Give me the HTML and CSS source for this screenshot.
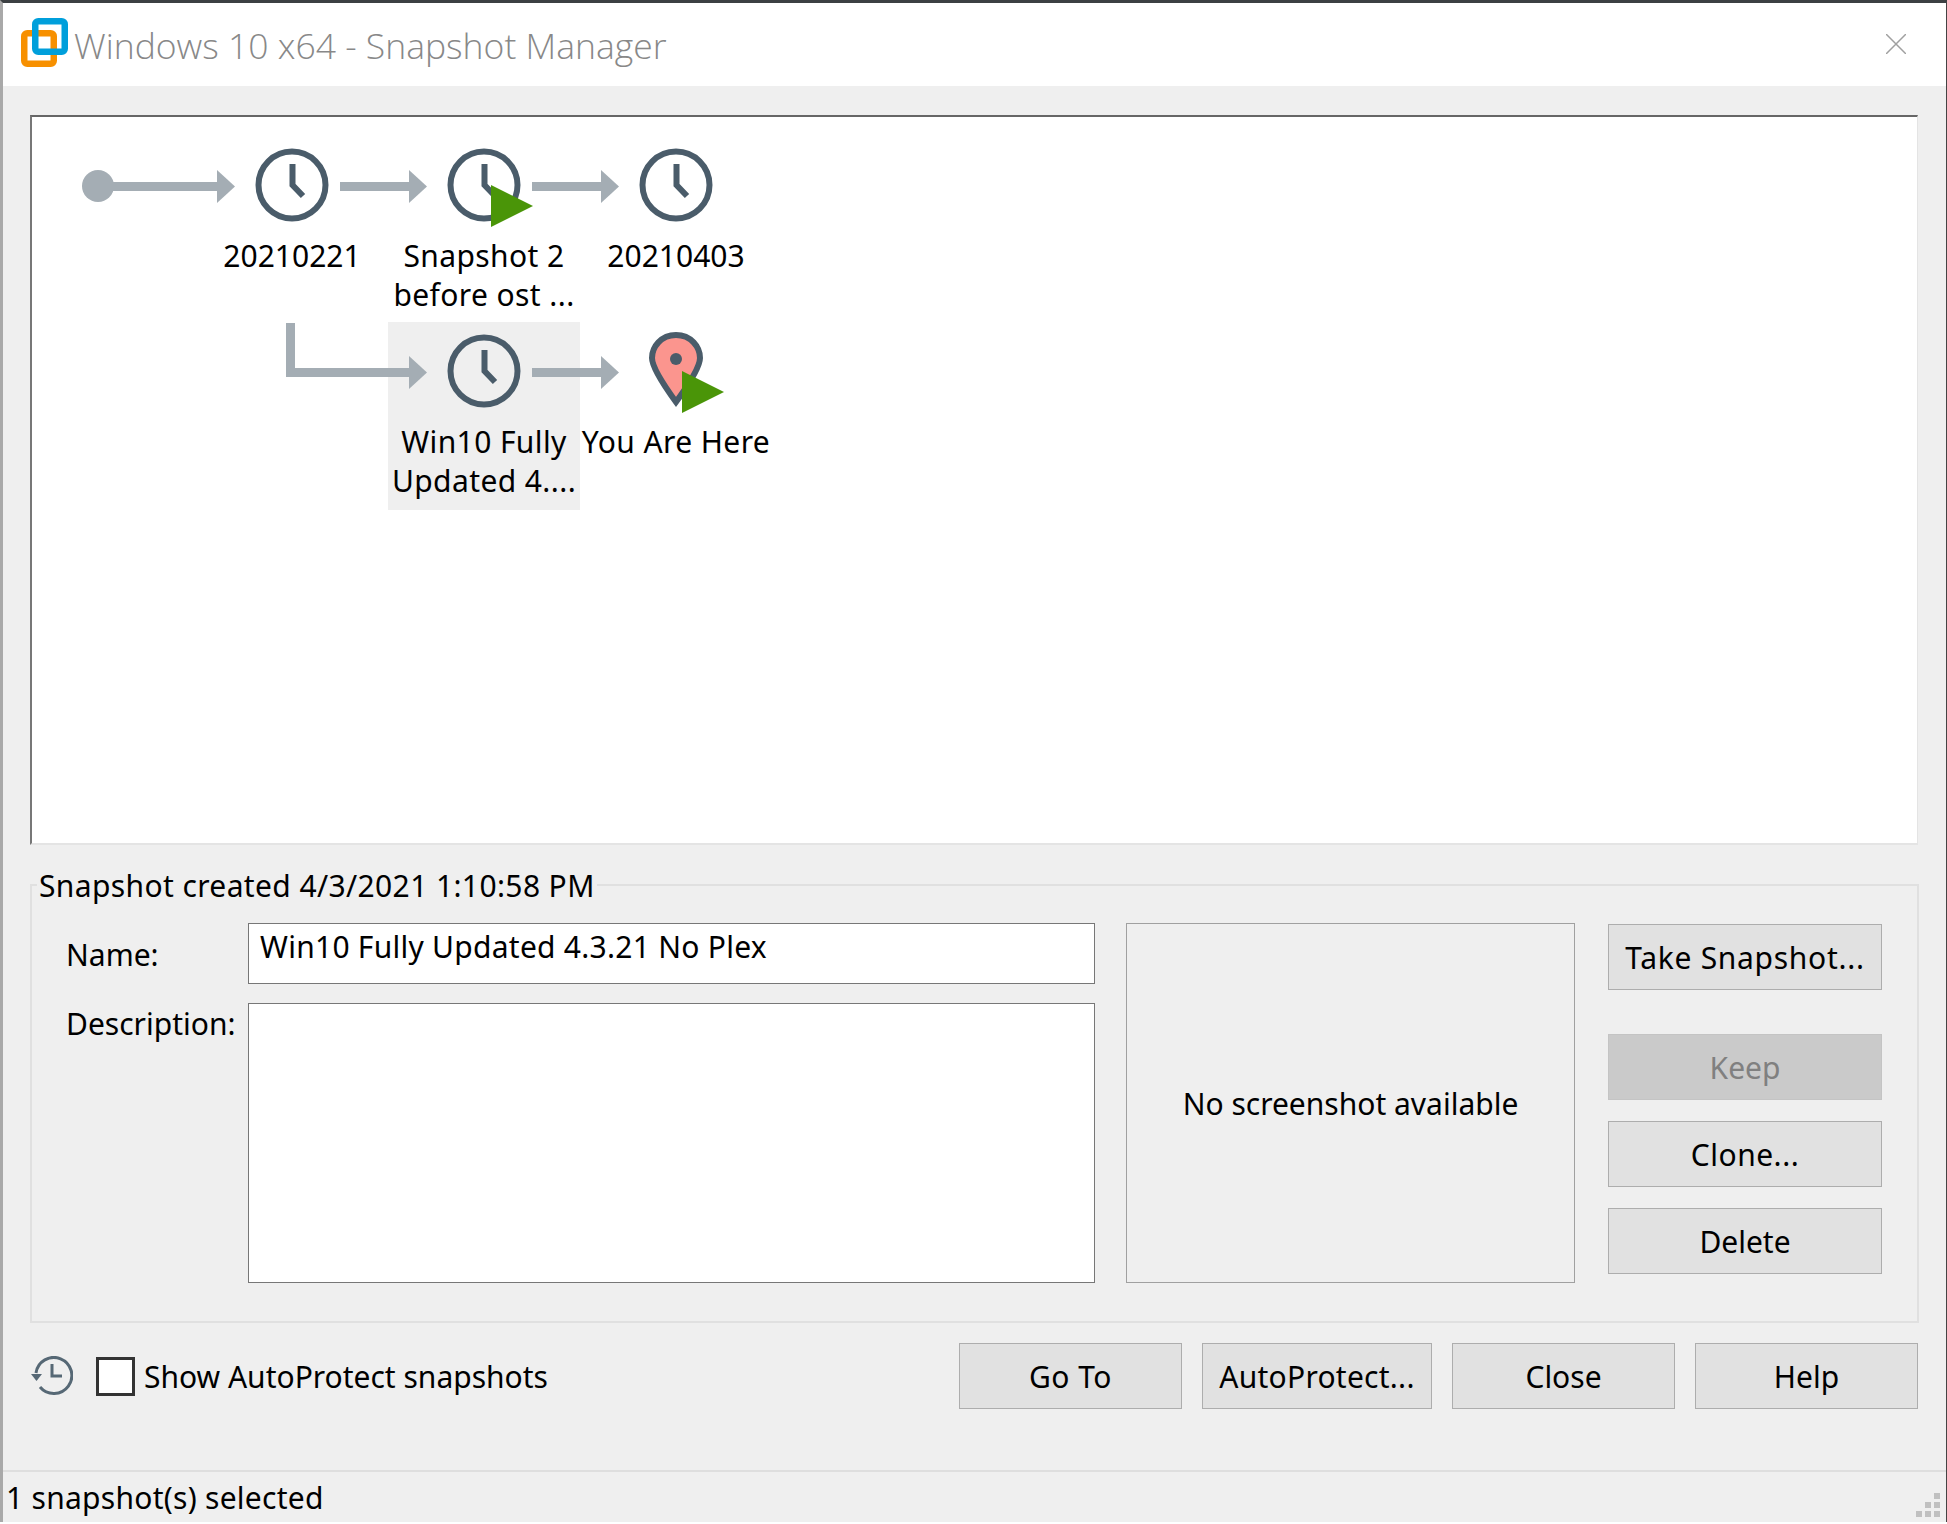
FILE: index.html
```html
<!DOCTYPE html>
<html lang="en">
<head>
    <meta charset="UTF-8">
    <title>Windows 10 x64 - Snapshot Manager</title>
    <link rel="stylesheet" href="styles.css">
</head>
<body>
    <div class="window">
        <header class="titlebar">
            <svg class="app-logo" width="47" height="49" viewBox="0 0 47 49">
                <rect x="3.250" y="15.250" width="29.500" height="30.500" rx="3" fill="none" stroke="#f79000" stroke-width="6.500"/>
                <rect x="14.250" y="3.250" width="29.500" height="30.500" rx="3" fill="none" stroke="#009fdb" stroke-width="6.500"/>
            </svg>
            <span class="window-title">Windows 10 x64 - Snapshot Manager</span>
            <svg class="close-x" width="20" height="20" viewBox="0 0 20 20">
                <path d="M0 0L20 20M20 0L0 20" stroke="#a0a0a0" stroke-width="1.500"/>
            </svg>
        </header>

        <main class="content">
            <section class="tree-panel">
                <svg class="tree-lines" width="1888" height="400" viewBox="30 115 1888 400">
                    <circle cx="98" cy="186" r="16" fill="#a4adb4"/>
                    <path class="link" d="M98 186.500H217"/>
                    <path class="head" d="M217 170L235 186.500L217 203Z"/>
                    <path class="link" d="M340 186.500H409"/>
                    <path class="head" d="M409 170L427 186.500L409 203Z"/>
                    <path class="link" d="M532 186.500H601"/>
                    <path class="head" d="M601 170L619 186.500L601 203Z"/>
                    <path class="link" d="M290.500 323V372.500H409"/>
                    <path class="head" d="M409 356L427 372.500L409 389Z"/>
                    <path class="link" d="M532 372.500H601"/>
                    <path class="head" d="M601 356L619 372.500L601 389Z"/>
                </svg>
                <div class="tree-grid">
                    <div class="node node-first">
                        <svg class="node-icon" width="84" height="84" viewBox="0 0 84 84">
                            <circle class="clock-ring" cx="42" cy="42" r="33.500"/>
                            <path class="clock-hand" d="M42.500 21V42L53 53"/>
                        </svg>
                        <div class="node-label">20210221</div>
                    </div>
                    <div class="node">
                        <svg class="node-icon" width="84" height="84" viewBox="0 0 84 84">
                            <circle class="clock-ring" cx="42" cy="42" r="33.500"/>
                            <path class="clock-hand" d="M42.500 21V42L53 53"/>
                            <path class="play" d="M49 42L91 63L49 84Z"/>
                        </svg>
                        <div class="node-label label-wide">Snapshot 2<br>before ost ...</div>
                    </div>
                    <div class="node">
                        <svg class="node-icon" width="84" height="84" viewBox="0 0 84 84">
                            <circle class="clock-ring" cx="42" cy="42" r="33.500"/>
                            <path class="clock-hand" d="M42.500 21V42L53 53"/>
                        </svg>
                        <div class="node-label">20210403</div>
                    </div>
                    <div class="node node-selected">
                        <svg class="node-icon" width="84" height="84" viewBox="0 0 84 84">
                            <circle class="clock-ring" cx="42" cy="42" r="33.500"/>
                            <path class="clock-hand" d="M42.500 21V42L53 53"/>
                        </svg>
                        <div class="node-label label-wide">Win10 Fully<br>Updated 4....</div>
                    </div>
                    <div class="node node-here">
                        <svg class="node-icon" width="84" height="84" viewBox="0 0 84 84">
                            <path class="pin" d="M42 6C27 6 18 18 18 29C18 40 34 62 42 73C50 62 66 40 66 29C66 18 57 6 42 6Z"/>
                            <circle cx="42" cy="30" r="6" fill="#4a5c6a"/>
                            <path class="play" d="M48 42L90 63L48 84Z"/>
                        </svg>
                        <div class="node-label label-wide">You Are Here</div>
                    </div>
                </div>
            </section>

            <fieldset class="details">
                <legend>Snapshot created 4/3/2021 1:10:58 PM</legend>
                <div class="details-row">
                    <div class="form-grid">
                        <label class="form-label">Name:</label>
                        <div class="name-input">Win10 Fully Updated 4.3.21 No Plex</div>
                        <label class="form-label form-label-top">Description:</label>
                        <div class="desc-input"></div>
                    </div>
                    <div class="shot-box">No screenshot available</div>
                    <div class="side-buttons">
                        <button class="btn btn-take">Take Snapshot...</button>
                        <button class="btn btn-disabled">Keep</button>
                        <button class="btn btn-clone">Clone...</button>
                        <button class="btn">Delete</button>
                    </div>
                </div>
            </fieldset>

            <div class="bottom-row">
                <svg class="history-icon" width="42" height="40" viewBox="0 0 42 40">
                    <path d="M5 17A18 18 0 1 1 9 31" fill="none" stroke="#566875" stroke-width="3"/>
                    <path d="M0 18H11L5.500 25Z" fill="#566875"/>
                    <path d="M21 8V20H31" fill="none" stroke="#566875" stroke-width="3"/>
                </svg>
                <span class="checkbox"></span>
                <span class="checkbox-label">Show AutoProtect snapshots</span>
                <div class="bottom-buttons">
                    <button class="btn btn-goto">Go To</button>
                    <button class="btn btn-auto">AutoProtect...</button>
                    <button class="btn btn-close">Close</button>
                    <button class="btn btn-help">Help</button>
                </div>
            </div>
        </main>

        <footer class="statusbar">
            <span class="status-text">1 snapshot(s) selected</span>
            <svg class="grip" width="24" height="24" viewBox="0 0 24 24">
                <rect x="18" y="0" width="6" height="6"/>
                <rect x="9" y="9" width="6" height="6"/>
                <rect x="18" y="9" width="6" height="6"/>
                <rect x="0" y="18" width="6" height="6"/>
                <rect x="9" y="18" width="6" height="6"/>
                <rect x="18" y="18" width="6" height="6"/>
            </svg>
        </footer>
    </div>
</body>
</html>
```
FILE: styles.css
```css
* {
    box-sizing: border-box;
}
body {
    margin: 0;
    background: #fff;
    font-family: "Noto Sans", sans-serif;
    font-size: 30px;
    color: #000;
}
.window {
    width: 1947px;
    height: 1522px;
    display: flex;
    flex-direction: column;
    background: #efefef;
    border-top: 3px solid #3c4043;
    border-left: 3px solid #a9a9a9;
    border-right: 1px solid #444;
}
.titlebar {
    height: 83px;
    flex: none;
    background: #fff;
    display: flex;
    align-items: center;
    padding-left: 18px;
    padding-right: 40px;
}
.app-logo {
    flex: none;
    margin-bottom: 4px;
}
.window-title {
    margin-left: 6px;
    font-family: "Open Sans", sans-serif;
    font-weight: 300;
    font-size: 35.500px;
    color: #888;
}
.close-x {
    margin-left: auto;
    margin-bottom: 2px;
}
.content {
    padding: 29px 28px 0 27px;
}
.tree-panel {
    position: relative;
    height: 730px;
    background: #fff;
    border-top: 2px solid #666;
    border-left: 2px solid #777;
    border-right: 1px solid #e4e4e4;
    border-bottom: 2px solid #e4e4e4;
    padding-top: 19px;
}
.tree-lines {
    position: absolute;
    left: -2px;
    top: -2px;
    z-index: 2;
}
.link {
    fill: none;
    stroke: #a4adb4;
    stroke-width: 9;
}
.head {
    fill: #a4adb4;
}
.tree-grid {
    display: grid;
    grid-template-columns: 164px repeat(3, 192px);
    grid-auto-rows: 186px;
}
.node {
    display: flex;
    flex-direction: column;
    align-items: center;
    padding-top: 7px;
}
.node-first {
    grid-column: 2;
}
.node-selected {
    grid-column: 3;
    grid-row: 2;
    background: #efefef;
    height: 188px;
}
.node-here {
    grid-column: 4;
    grid-row: 2;
}
.node-icon {
    flex: none;
    overflow: visible;
}
.clock-ring {
    fill: none;
    stroke: #4a5c6a;
    stroke-width: 6;
}
.clock-hand {
    fill: none;
    stroke: #4a5c6a;
    stroke-width: 6;
}
.play {
    fill: #4a9508;
}
.pin {
    fill: #fb958e;
    stroke: #4a5c6a;
    stroke-width: 6;
    stroke-linejoin: miter;
}
.node-label {
    margin-top: 9px;
    line-height: 39px;
    text-align: center;
    white-space: nowrap;
}
.label-wide {
    letter-spacing: 0.400px;
}
.details {
    margin: 19px 0 0 0;
    padding: 18px 0 38px 34px;
    border: 2px solid #e0e0e0;
    width: 1889px;
    min-width: 0;
}
.details legend {
    margin-left: -29px;
    padding: 2px 2px 0;
    line-height: 39px;
    letter-spacing: 0.380px;
}
.details-row {
    display: flex;
    align-items: flex-start;
}
.form-grid {
    display: grid;
    grid-template-columns: 182px 847px;
    grid-template-rows: 61px 280px;
    row-gap: 19px;
}
.form-label {
    line-height: 64px;
}
.form-label-top {
    line-height: 42px;
}
.name-input,
.desc-input {
    background: #fff;
    border: 1px solid #777;
}
.name-input {
    padding: 0 11px;
    line-height: 46px;
    letter-spacing: 0.260px;
}
.shot-box {
    width: 449px;
    height: 360px;
    margin-left: 31px;
    border: 1px solid #a0a0a0;
    display: flex;
    align-items: center;
    justify-content: center;
}
.side-buttons {
    width: 274px;
    margin-left: 33px;
    margin-top: 1px;
    display: flex;
    flex-direction: column;
    gap: 21px;
}
.btn {
    height: 66px;
    padding: 0;
    background: #e1e1e1;
    border: 1px solid #adadad;
    font: inherit;
    color: #000;
}
.btn-take {
    margin-bottom: 23px;
    letter-spacing: 0.700px;
}
.btn-disabled {
    background: #cacaca;
    border-color: #c4c4c4;
    color: #808080;
}
.btn-clone {
    letter-spacing: 0.500px;
}
.bottom-row {
    margin-top: 20px;
    display: flex;
    align-items: center;
    height: 66px;
}
.history-icon {
    flex: none;
    margin-left: 1px;
}
.checkbox {
    width: 39px;
    height: 39px;
    margin-left: 23px;
    background: #fff;
    border: 3px solid #333;
}
.checkbox-label {
    margin-left: 9px;
}
.bottom-buttons {
    margin-left: auto;
    display: flex;
    gap: 20px;
}
.btn-goto,
.btn-help {
    width: 223px;
}
.btn-goto {
    letter-spacing: 0.500px;
}
.btn-auto {
    width: 230px;
    letter-spacing: 0.250px;
}
.btn-close {
    width: 223px;
}
.statusbar {
    margin-top: auto;
    height: 52px;
    border-top: 2px solid #dedede;
    padding: 0 6px 0 3px;
    display: flex;
    align-items: flex-end;
    justify-content: space-between;
    line-height: 48px;
}
.status-text {
    letter-spacing: 0.270px;
}
.grip {
    margin-bottom: 5px;
}
.grip rect {
    fill: #c0c0c0;
}
```
